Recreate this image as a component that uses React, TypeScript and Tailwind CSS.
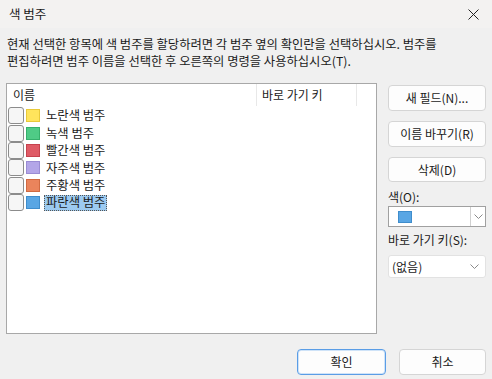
import React from "react";

const font = { fontFamily: '"Noto Sans CJK KR", "Noto Sans", sans-serif' };

const items = [
  { name: "노란색 범주", color: "#FFE45C", border: "#e8c93a" },
  { name: "녹색 범주", color: "#4FCB86", border: "#36b06c" },
  { name: "빨간색 범주", color: "#DF5B66", border: "#c6424e" },
  { name: "자주색 범주", color: "#B3A6E8", border: "#9a8cd4" },
  { name: "주황색 범주", color: "#EA845C", border: "#d06a42" },
  { name: "파란색 범주", color: "#59A6E4", border: "#3f8dcc" },
];

function Chevron() {
  return (
    <svg width="9" height="5" viewBox="0 0 9 5" fill="none">
      <path d="M0.5 0.5 L4.5 4.5 L8.5 0.5" stroke="#8a8a8a" strokeWidth="1" />
    </svg>
  );
}

function Btn({ children, primary }: { children: React.ReactNode; primary?: boolean }) {
  return (
    <div
      className={
        "flex items-center justify-center rounded-[4px] bg-[#fdfdfd] text-[12px] text-[#1a1a1a] " +
        (primary ? "border border-[#5a9de6] shadow-[inset_0_0_0_1px_#cfe3f8]" : "border border-[#d5d5d5]")
      }
      style={{ width: "100%", height: "100%" }}
    >
      {children}
    </div>
  );
}

export default function App() {
  return (
    <div className="w-[492px] h-[379px] bg-[#f0f0f0] flex flex-col text-[#1a1a1a]" style={font}>
      {/* Title bar */}
      <div className="h-[28px] bg-[#f3f2f1] flex items-center justify-between pl-[9px] pr-[9px] shrink-0">
        <span className="text-[12.5px] leading-none">색 범주</span>
        <svg width="11" height="11" viewBox="0 0 11 11" className="mr-[4px]">
          <path d="M0.5 0.5 L10.5 10.5 M10.5 0.5 L0.5 10.5" stroke="#222" strokeWidth="1" />
        </svg>
      </div>

      {/* Description */}
      <div className="pl-[7px] pt-[8px] text-[12.3px] leading-[17px]">
        <div>현재 선택한 항목에 색 범주를 할당하려면 각 범주 옆의 확인란을 선택하십시오. 범주를</div>
        <div>편집하려면 범주 이름을 선택한 후 오른쪽의 명령을 사용하십시오(T).</div>
      </div>

      {/* Main */}
      <div className="flex mt-[13px] pl-[6px]">
        {/* List */}
        <div className="w-[371px] h-[251px] border border-[#a8a8a8] bg-white flex flex-col">
          <div className="h-[22px] flex text-[12px] shrink-0">
            <div className="w-[250px] border-r border-[#e8e8e8] flex items-center pl-[6px]">이름</div>
            <div className="w-[100px] border-r border-[#e8e8e8] flex items-center pl-[5px]">바로 가기 키</div>
          </div>
          <div className="flex flex-col pt-[1px]">
            {items.map((it, i) => (
              <div key={i} className="h-[17.4px] flex items-center text-[12.3px]">
                <div className="ml-[1px] w-[16px] h-[17px] rounded-[3px] border border-[#8c8c8c] bg-[#f6f6f6] shrink-0" />
                <div
                  className="ml-[2px] w-[14px] h-[13px] shrink-0"
                  style={{ backgroundColor: it.color, border: `1px solid ${it.border}` }}
                />
                {i === items.length - 1 ? (
                  <span className="ml-[4px] px-[1px] h-[16px] flex items-center bg-[#9ccaf0] border border-dotted border-[#555]">
                    {it.name}
                  </span>
                ) : (
                  <span className="ml-[6px]">{it.name}</span>
                )}
              </div>
            ))}
          </div>
        </div>

        {/* Right column */}
        <div className="ml-[11px] w-[98px] flex flex-col pt-[2px]">
          <div className="h-[26px]"><Btn>새 필드(N)...</Btn></div>
          <div className="h-[26px] mt-[10px]"><Btn>이름 바꾸기(R)</Btn></div>
          <div className="h-[25px] mt-[10px]"><Btn>삭제(D)</Btn></div>
          <div className="text-[12px] leading-[16px] mt-[7px]">색(O):</div>
          <div className="mt-[1px] h-[21px] border border-[#a0a0a0] bg-white flex">
            <div className="flex-1 flex items-center pl-[9px]">
              <div className="w-[14px] h-[12px] bg-[#59A6E4] border border-[#3f8dcc]" />
            </div>
            <div className="w-[15px] border-l border-[#d0d0d0] flex items-center justify-center">
              <Chevron />
            </div>
          </div>
          <div className="text-[12px] leading-[16px] mt-[5px]">바로 가기 키(S):</div>
          <div className="mt-[7px] h-[23px] border border-[#e2e2e2] rounded-[3px] bg-white flex items-center justify-between pl-[3px] pr-[6px] text-[12px]">
            <span>(없음)</span>
            <Chevron />
          </div>
        </div>
      </div>

      {/* Footer */}
      <div className="flex justify-end mt-[15px] pr-[6px] gap-[13px]">
        <div className="w-[89px] h-[26px]"><Btn primary>확인</Btn></div>
        <div className="w-[87px] h-[26px]"><Btn>취소</Btn></div>
      </div>
    </div>
  );
}
